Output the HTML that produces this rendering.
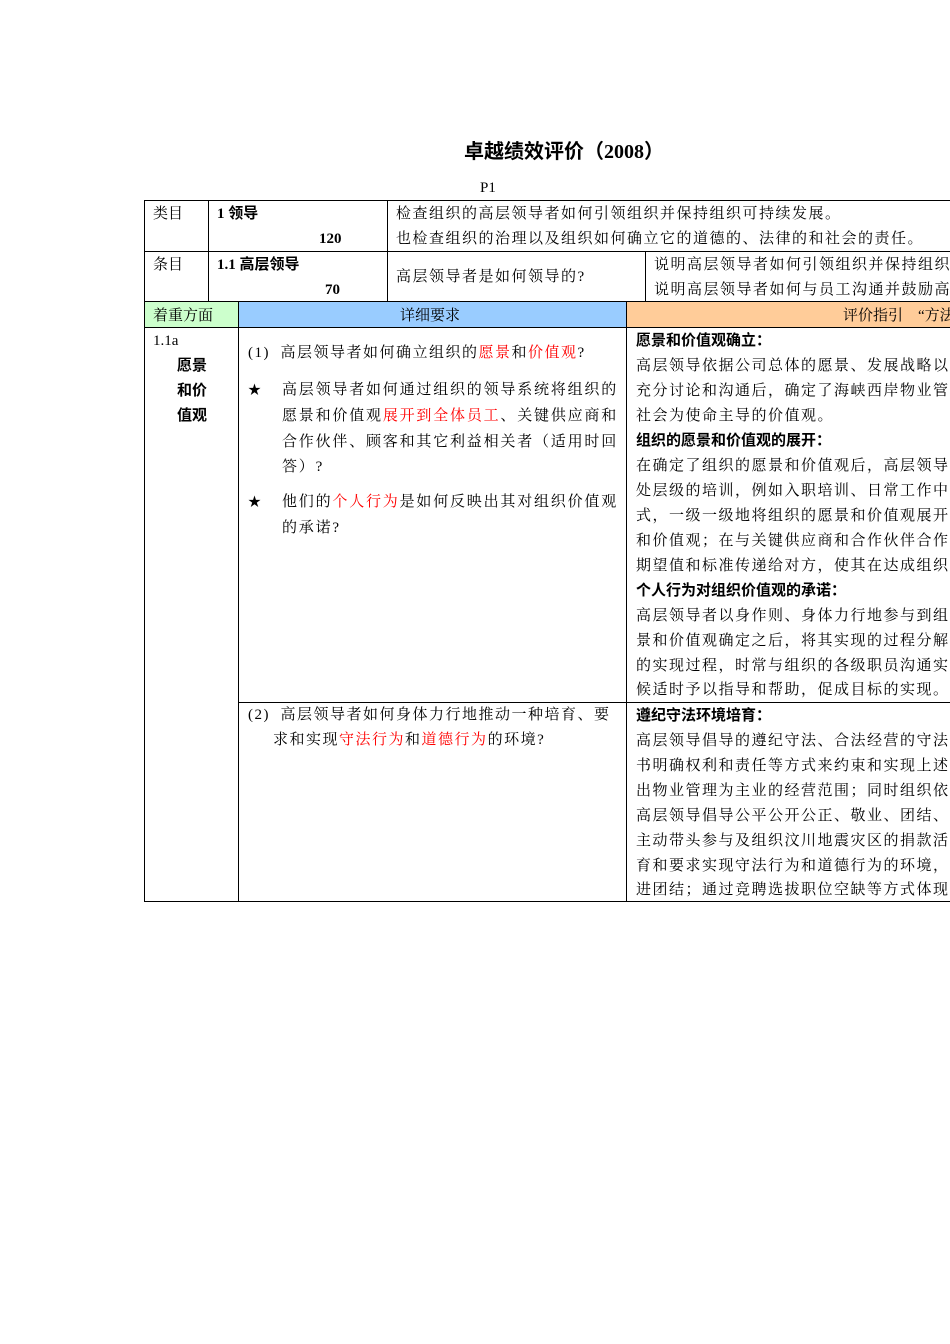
<!DOCTYPE html>
<html><head><meta charset="utf-8"><style>
html,body{margin:0;padding:0;width:950px;height:1344px;overflow:hidden;background:#fff;position:relative}
body{font-family:"Liberation Serif","Noto Serif CJK SC",serif;font-size:15px;color:#000}
#w{position:absolute;left:0;top:0;width:950px;height:1344px;overflow:hidden}
.a{position:absolute;white-space:nowrap;line-height:20px}
.b{font-family:"Liberation Serif","Noto Sans CJK SC",sans-serif;font-weight:bold}
.r{color:#f00}
.h{position:absolute;height:1px;background:#000}
.v{position:absolute;width:1px;background:#000}
.bx{position:absolute}
.s{letter-spacing:1.5px}
.j{letter-spacing:1.8px}
.st{font-size:13px}
</style></head><body><div id="w">
<div class="a b" style="left:464px;top:140px;font-size:20px;line-height:24px">卓越绩效评价（2008）</div>
<div class="a" style="left:480px;top:178px">P1</div>

<div class="bx" style="left:145px;top:302px;width:93px;height:25px;background:#ccffcc"></div>
<div class="bx" style="left:239px;top:302px;width:387px;height:25px;background:#99ccff"></div>
<div class="bx" style="left:627px;top:302px;width:323px;height:25px;background:#ffcc99"></div>

<div class="h" style="left:144px;top:200px;width:806px"></div>
<div class="h" style="left:144px;top:251px;width:806px"></div>
<div class="h" style="left:144px;top:301px;width:806px"></div>
<div class="h" style="left:144px;top:327px;width:806px"></div>
<div class="h" style="left:238px;top:702px;width:712px"></div>
<div class="h" style="left:144px;top:901px;width:806px"></div>
<div class="v" style="left:144px;top:200px;height:702px"></div>
<div class="v" style="left:208px;top:200px;height:101px"></div>
<div class="v" style="left:387px;top:200px;height:101px"></div>
<div class="v" style="left:645px;top:251px;height:50px"></div>
<div class="v" style="left:238px;top:301px;height:600px"></div>
<div class="v" style="left:626px;top:301px;height:600px"></div>

<div class="a" style="left:153px;top:204px">类目</div>
<div class="a b" style="left:217px;top:204px">1 领导</div>
<div class="a b" style="left:319px;top:229px">120</div>
<div class="a s" style="left:396px;top:204px">检查组织的高层领导者如何引领组织并保持组织可持续发展。</div>
<div class="a s" style="left:396px;top:229px">也检查组织的治理以及组织如何确立它的道德的、法律的和社会的责任。</div>
<div class="a" style="left:153px;top:255px">条目</div>
<div class="a b" style="left:217px;top:255px">1.1 高层领导</div>
<div class="a b" style="left:325px;top:280px">70</div>
<div class="a s" style="left:396px;top:267px">高层领导者是如何领导的?</div>
<div class="a s" style="left:654px;top:255px">说明高层领导者如何引领组织并保持组织可持续发展。</div>
<div class="a s" style="left:654px;top:280px">说明高层领导者如何与员工沟通并鼓励高绩效。</div>

<div class="a" style="left:153px;top:306px">着重方面</div>
<div class="a" style="left:400px;top:306px">详细要求</div>
<div class="a" style="left:843px;top:306px">评价指引　“方法</div>

<div class="a" style="left:153px;top:331px">1.1a</div>
<div class="a b" style="left:177px;top:356px">愿景</div>
<div class="a b" style="left:177px;top:381px">和价</div>
<div class="a b" style="left:177px;top:406px">值观</div>

<div class="a s" style="left:248px;top:343px">(1)&nbsp; 高层领导者如何确立组织的<span class="r">愿景</span>和<span class="r">价值观</span>?</div>
<div class="a st" style="left:248px;top:380px">★</div>
<div class="a j" style="left:282px;top:380px">高层领导者如何通过组织的领导系统将组织的</div>
<div class="a j" style="left:282px;top:406px">愿景和价值观<span class="r">展开到全体员工</span>、关键供应商和</div>
<div class="a j" style="left:282px;top:432px">合作伙伴、顾客和其它利益相关者（适用时回</div>
<div class="a j" style="left:282px;top:457px">答）?</div>
<div class="a st" style="left:248px;top:492px">★</div>
<div class="a j" style="left:282px;top:492px">他们的<span class="r">个人行为</span>是如何反映出其对组织价值观</div>
<div class="a j" style="left:282px;top:518px">的承诺?</div>

<div class="a s" style="left:248px;top:705px">(2)&nbsp; 高层领导者如何身体力行地推动一种培育、要</div>
<div class="a s" style="left:273px;top:730px">求和实现<span class="r">守法行为</span>和<span class="r">道德行为</span>的环境?</div>

<div class="a b" style="left:636px;top:331px">愿景和价值观确立：</div>
<div class="a s" style="left:636px;top:356px">高层领导依据公司总体的愿景、发展战略以及</div>
<div class="a s" style="left:636px;top:381px">充分讨论和沟通后，确定了海峡西岸物业管理</div>
<div class="a s" style="left:636px;top:406px">社会为使命主导的价值观。</div>
<div class="a b" style="left:636px;top:431px">组织的愿景和价值观的展开：</div>
<div class="a s" style="left:636px;top:456px">在确定了组织的愿景和价值观后，高层领导者</div>
<div class="a s" style="left:636px;top:481px">处层级的培训，例如入职培训、日常工作中的</div>
<div class="a s" style="left:636px;top:506px">式，一级一级地将组织的愿景和价值观展开到</div>
<div class="a s" style="left:636px;top:531px">和价值观；在与关键供应商和合作伙伴合作时</div>
<div class="a s" style="left:636px;top:556px">期望值和标准传递给对方，使其在达成组织的</div>
<div class="a b" style="left:636px;top:581px">个人行为对组织价值观的承诺：</div>
<div class="a s" style="left:636px;top:606px">高层领导者以身作则、身体力行地参与到组织</div>
<div class="a s" style="left:636px;top:631px">景和价值观确定之后，将其实现的过程分解到</div>
<div class="a s" style="left:636px;top:656px">的实现过程，时常与组织的各级职员沟通实现</div>
<div class="a s" style="left:636px;top:680px">候适时予以指导和帮助，促成目标的实现。</div>

<div class="a b" style="left:636px;top:706px">遵纪守法环境培育：</div>
<div class="a s" style="left:636px;top:731px">高层领导倡导的遵纪守法、合法经营的守法</div>
<div class="a s" style="left:636px;top:756px">书明确权利和责任等方式来约束和实现上述</div>
<div class="a s" style="left:636px;top:781px">出物业管理为主业的经营范围；同时组织依</div>
<div class="a s" style="left:636px;top:806px">高层领导倡导公平公开公正、敬业、团结、</div>
<div class="a s" style="left:636px;top:831px">主动带头参与及组织汶川地震灾区的捐款活</div>
<div class="a s" style="left:636px;top:856px">育和要求实现守法行为和道德行为的环境，</div>
<div class="a s" style="left:636px;top:880px">进团结；通过竞聘选拔职位空缺等方式体现</div>
</div></body></html>
